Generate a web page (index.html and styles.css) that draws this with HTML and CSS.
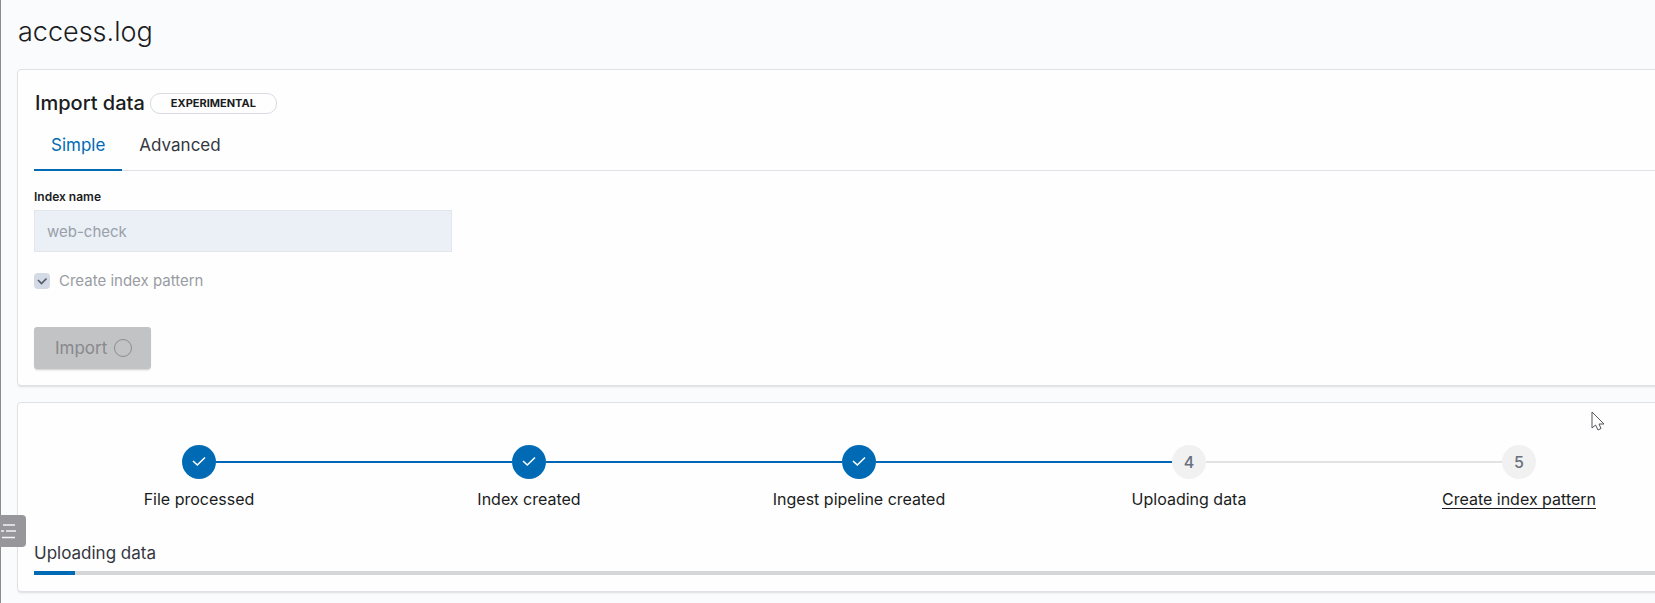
FILE: index.html
```
<!DOCTYPE html>
<html lang="en">
<head>
<meta charset="utf-8">
<title>access.log</title>
<link rel="stylesheet" href="styles.css">
</head>
<body>
<main class="page">
  <h1 class="page-title">access.log</h1>

  <section class="panel import-panel">
    <header class="panel-header">
      <h2 class="panel-title">Import data</h2>
      <span class="badge">EXPERIMENTAL</span>
    </header>
    <div class="tabs" role="tablist">
      <button class="tab tab-selected" role="tab" aria-selected="true">Simple</button>
      <button class="tab" role="tab" aria-selected="false">Advanced</button>
    </div>
    <label class="field-label" for="index-name">Index name</label>
    <input class="field" id="index-name" type="text" value="web-check" disabled>
    <div class="check-row">
      <input class="check" id="create-pattern" type="checkbox" checked disabled>
      <label class="check-label" for="create-pattern">Create index pattern</label>
    </div>
    <button class="import-button" disabled>Import<span class="spinner"></span></button>
  </section>

  <section class="panel progress-panel">
    <ol class="steps">
      <li class="step step-done">
        <span class="step-dot"><svg class="step-check" viewBox="0 0 16 16"><path d="M2 7l4.300 4L14 3.500"/></svg></span>
        <span class="step-label">File processed</span>
      </li>
      <li class="step step-done">
        <span class="step-dot"><svg class="step-check" viewBox="0 0 16 16"><path d="M2 7l4.300 4L14 3.500"/></svg></span>
        <span class="step-label">Index created</span>
      </li>
      <li class="step step-done">
        <span class="step-dot"><svg class="step-check" viewBox="0 0 16 16"><path d="M2 7l4.300 4L14 3.500"/></svg></span>
        <span class="step-label">Ingest pipeline created</span>
      </li>
      <li class="step">
        <span class="step-dot">4</span>
        <span class="step-label">Uploading data</span>
      </li>
      <li class="step">
        <span class="step-dot">5</span>
        <a class="step-label step-link" href="#">Create index pattern</a>
      </li>
    </ol>
    <p class="upload-label" id="upload-label">Uploading data</p>
    <div class="bar" role="progressbar" aria-labelledby="upload-label" aria-valuenow="2"><div class="bar-fill"></div></div>
  </section>
</main>

<button class="nav-toggle" aria-label="Toggle navigation">
  <svg class="nav-icon" viewBox="0 0 26 32"><path d="M3 10h12M1 16h3M6 16h10M2 22.500h13"/></svg>
</button>
<svg class="cursor" viewBox="0 0 14 20"><path d="M1 1v16l3.500-3 2.500 5 3-1.500-2-4.500H13z"/></svg>
</body>
</html>
```

FILE: styles.css
```
* {
  box-sizing: border-box;
}

body {
  margin: 0;
  min-height: 100vh;
  border-left: 1px solid #8c8c90;
  background: #fafbfd;
  color: #1a1c21;
  font-family: Inter, "Liberation Sans", sans-serif;
  font-size: 16px;
  line-height: 24px;
  overflow: hidden;
}

button,
input {
  font: inherit;
}

/* The workspace runs past the right edge of the window. */
.page {
  display: flex;
  flex-direction: column;
  width: calc(100% + 46px);
  padding: 12px 0 10px 16px;
}

.page-title {
  margin: 0 0 17px;
  padding-left: 1px;
  font-size: 27px;
  font-weight: 300;
  line-height: 40px;
}

.panel {
  padding: 16px;
  border: 1px solid #dfe1e6;
  border-radius: 4px;
  background: #fefefe;
  box-shadow: 0 2px 2px -1px rgba(150, 152, 160, 0.3);
}

.import-panel {
  display: flex;
  flex-direction: column;
  align-items: flex-start;
  margin-bottom: 16px;
}

.panel-header {
  display: flex;
  align-items: center;
  gap: 5px;
  height: 34px;
  padding-left: 1px;
}

.panel-title {
  margin: 0;
  font-size: 20px;
  font-weight: 500;
  line-height: 34px;
}

.badge {
  padding: 0 20px;
  border: 1px solid #d8dbe3;
  border-radius: 10px;
  font-size: 11px;
  font-weight: 700;
  line-height: 19px;
}

.tabs {
  display: flex;
  align-self: stretch;
  margin-bottom: 16px;
  border-bottom: 1px solid #dfe1e6;
}

.tab {
  height: 51px;
  margin-bottom: -1px;
  padding: 0 17px;
  border: 0;
  border-bottom: 2px solid transparent;
  background: none;
  color: #343741;
  font-size: 17px;
}

.tab-selected {
  border-bottom-color: #006bb4;
  color: #006bb4;
}

.field-label {
  margin-bottom: 3px;
  font-size: 12px;
  font-weight: 600;
  line-height: 20px;
}

.field {
  width: 418px;
  height: 42px;
  margin-bottom: 17px;
  padding: 0 12px;
  border: 1px solid #e2e5ec;
  border-radius: 0;
  background: #ebeff6;
  color: #98a0a9;
  font-size: 15px;
}

.check-row {
  display: flex;
  align-items: center;
  gap: 9px;
  margin-bottom: 34px;
}

.check {
  appearance: none;
  width: 16px;
  height: 16px;
  margin: 0;
  border-radius: 4px;
  background: #d3dae6 url("data:image/svg+xml,%3Csvg xmlns='http://www.w3.org/2000/svg' viewBox='0 0 16 16'%3E%3Cpath d='M4 7l3.500 3.500 5-5' fill='none' stroke='%23535966' stroke-width='1.600'/%3E%3C/svg%3E");
}

.check-label {
  color: #999ca2;
  font-size: 15px;
}

.import-button {
  display: flex;
  align-items: center;
  gap: 7px;
  height: 42px;
  padding: 0 19px 0 21px;
  border: 0;
  border-radius: 3px;
  background: #c2c3c4;
  box-shadow: 0 2px 2px -1px rgba(130, 130, 135, 0.4);
  color: #87898d;
  font-size: 17px;
}

.spinner {
  width: 18px;
  height: 18px;
  border: 1px solid #8c8d91;
  border-radius: 50%;
}

.progress-panel {
  padding-top: 42px;
}

.steps {
  display: grid;
  grid-template-columns: repeat(5, 1fr);
  margin: 0 0 30px;
  padding: 0;
  list-style: none;
}

.step {
  display: grid;
  grid-template-columns: 1fr 34px 1fr;
  align-items: center;
  row-gap: 8px;
}

.step::before,
.step::after {
  content: "";
  grid-row: 1;
  height: 2px;
  background: #e1e2e4;
}

.step::before {
  grid-column: 1;
}

.step::after {
  grid-column: 3;
}

.step-done::before,
.step-done::after,
.step-done + .step::before {
  background: #0065b5;
}

.step:first-child::before,
.step:last-child::after {
  background: none;
}

.step-dot {
  display: flex;
  grid-row: 1;
  grid-column: 2;
  align-items: center;
  justify-content: center;
  height: 34px;
  border-radius: 50%;
  background: #f1f1f2;
  color: #69707d;
  font-weight: 500;
}

.step-done .step-dot {
  background: #006bb4;
}

.step-check {
  width: 16px;
  height: 16px;
  fill: none;
  stroke: #fff;
  stroke-width: 1.600;
}

.step-label {
  grid-row: 2;
  grid-column: 1 / -1;
  justify-self: center;
}

.step-link {
  color: inherit;
  text-underline-offset: 3px;
}

.upload-label {
  margin: 0 0 6px;
  color: #343741;
  font-size: 17px;
}

.bar {
  height: 4px;
  background: #d5d6d8;
}

.bar-fill {
  width: 41px;
  height: 4px;
  background: #006bb4;
}

/* Floating handle of the hidden side navigation. */
.nav-toggle {
  position: absolute;
  top: 515px;
  left: 0;
  width: 26px;
  height: 32px;
  padding: 0;
  border: 0;
  border-radius: 0 4px 4px 0;
  background: #97979b;
}

.nav-icon {
  display: block;
  fill: none;
  stroke: #f4f4f5;
  stroke-width: 1.500;
}

.cursor {
  position: absolute;
  top: 411px;
  right: 50px;
  width: 14px;
  height: 20px;
  fill: #fff;
  stroke: #55565a;
}
```
